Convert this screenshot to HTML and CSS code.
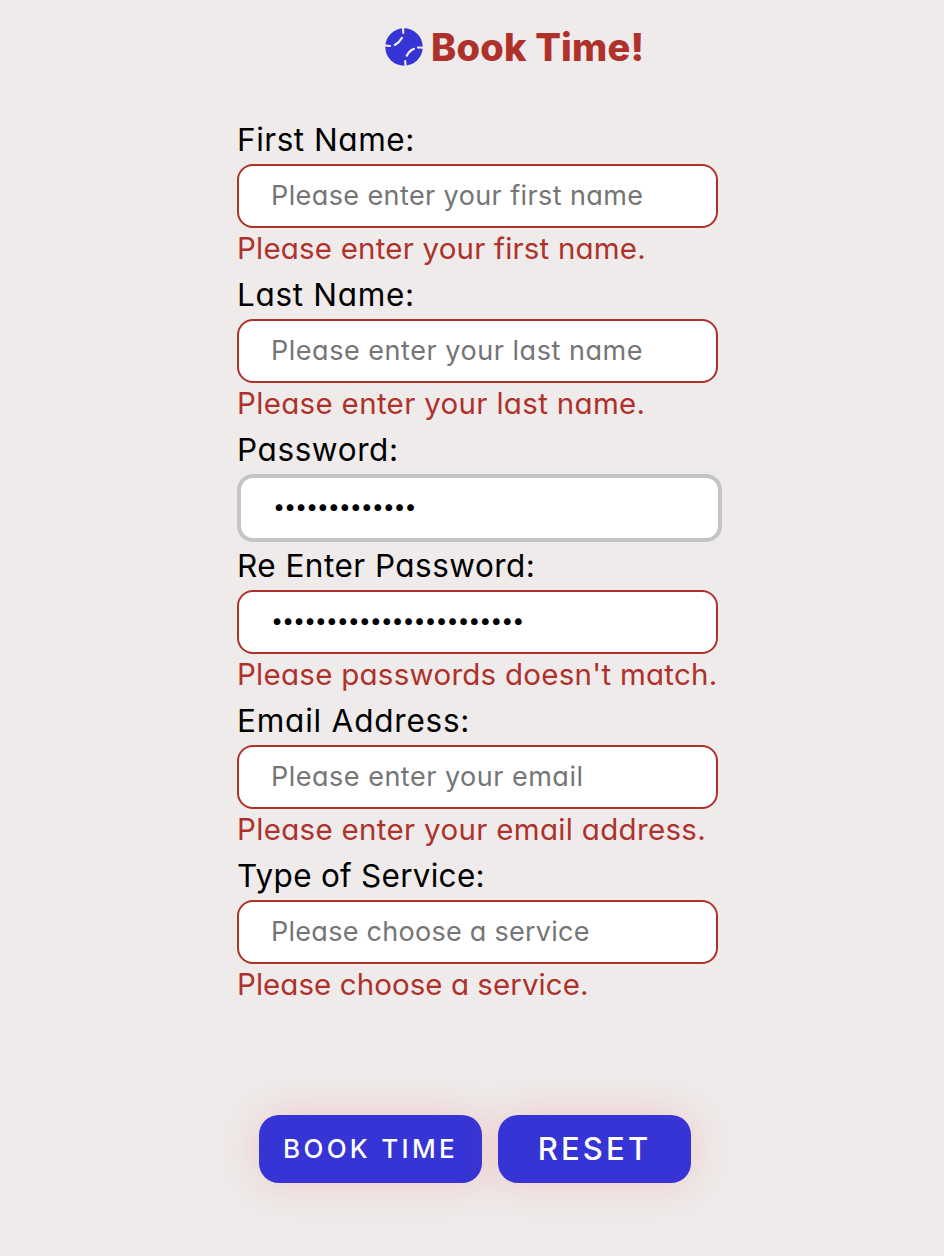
FILE: index.html
```html
<!DOCTYPE html>
<html lang="en">
<head>
<meta charset="utf-8">
<title>Book Time!</title>
<link rel="stylesheet" href="styles.css">
</head>
<body>
<header class="brand">
  <svg class="ball" viewBox="0 0 38 38" aria-hidden="true">
    <circle cx="19" cy="19" r="18.7" fill="#3634d5"/>
    <g fill="none" stroke="#eeebea" stroke-width="2.1" stroke-linecap="round">
      <path d="M18 0L18.3 5M0 17.5L5 18M38 19.8L33 19.5M20.5 38L20.2 33"/>
      <path d="M17 9.8Q14.5 14.5 9.8 17M21.8 27.8Q24 23 29 20.8"/>
    </g>
  </svg>
  <h1 class="title">Book Time!</h1>
</header>
<form class="form">
  <div class="field"><label class="label l1">First Name:</label><input class="input p1" placeholder="Please enter your first name"><p class="error e1">Please enter your first name.</p></div>
  <div class="field"><label class="label l2">Last Name:</label><input class="input p2" placeholder="Please enter your last name"><p class="error e2">Please enter your last name.</p></div>
  <div class="field"><label class="label l3">Password:</label><input class="input valid dots" type="password" value="1234567890123"></div>
  <div class="field"><label class="label l4">Re Enter Password:</label><input class="input dots" type="password" value="12345678901234567890123"><p class="error e4">Please passwords doesn't match.</p></div>
  <div class="field"><label class="label l5">Email Address:</label><input class="input p5" placeholder="Please enter your email"><p class="error e5">Please enter your email address.</p></div>
  <div class="field"><label class="label l6">Type of Service:</label><input class="input p6" placeholder="Please choose a service"><p class="error e6">Please choose a service.</p></div>
</form>
<div class="actions">
  <button class="button book" type="button">BOOK TIME</button>
  <button class="button reset" type="button">RESET</button>
</div>
</body>
</html>
```
FILE: styles.css
```css
* { box-sizing: border-box; }
body {
  margin: 0;
  height: 1256px;
  overflow: hidden;
  background: #eeebea;
  color: #000;
  font-family: Inter, "Open Sans", sans-serif;
  font-feature-settings: "cv11";
}
.brand { display: flex; align-items: center; gap: 8px; height: 116px; padding: 0 0 22px 385px; }
.ball { width: 38px; height: 38px; flex: none; }
.title { margin: 0; color: #ae312b; font-size: 38px; font-weight: 800; line-height: 56px; letter-spacing: .2px; white-space: nowrap; }
.form { width: 485px; margin-left: 237px; }
.field { display: flex; flex-direction: column; align-items: flex-start; }
.label { height: 48px; font-size: 31.5px; line-height: 48px; white-space: nowrap; }
.input {
  width: 481px;
  height: 64px;
  padding: 0 32px 2px;
  border: 2px solid #ae312b;
  border-radius: 16px;
  outline: 0;
  background: #fff;
  color: #000;
  font-family: inherit;
  font-feature-settings: inherit;
  font-size: 27px;
}
.input::placeholder { color: #757575; opacity: 1; }
.valid { width: 485px; height: 68px; border: 4px solid #c4c4c4; }
.dots { padding-bottom: 4px; font-size: 21.5px; letter-spacing: -1.13px; }
.error { height: 43px; margin: 0; color: #ae312b; font-size: 29.5px; line-height: 40px; white-space: nowrap; }

/* Per-line tracking */
.l1 { letter-spacing: .53px; }
.l2 { letter-spacing: .68px; }
.l3 { letter-spacing: .59px; }
.l4 { letter-spacing: .47px; }
.l5 { letter-spacing: .78px; }
.l6 { letter-spacing: .26px; }
.p1 { letter-spacing: .4px; }
.p2 { letter-spacing: .53px; }
.p5 { letter-spacing: .5px; }
.p6 { letter-spacing: .27px; }
.e1 { letter-spacing: .2px; }
.e2 { letter-spacing: .33px; }
.e4 { letter-spacing: .27px; }
.e5 { letter-spacing: .32px; }
.e6 { letter-spacing: .06px; }

.actions { display: flex; gap: 16px; margin: 108px 0 0 259px; }
.button {
  height: 68px;
  padding: 0 0 2px;
  border: 0;
  border-radius: 20px;
  background: #3634d5;
  color: #fff;
  font-family: inherit;
  font-weight: 500;
  box-shadow: 0 0 40px rgba(240, 80, 80, .22);
}
.book { width: 223px; font-size: 26px; letter-spacing: 3.3px; }
.reset { width: 193px; font-size: 31px; letter-spacing: 3.2px; }
```
